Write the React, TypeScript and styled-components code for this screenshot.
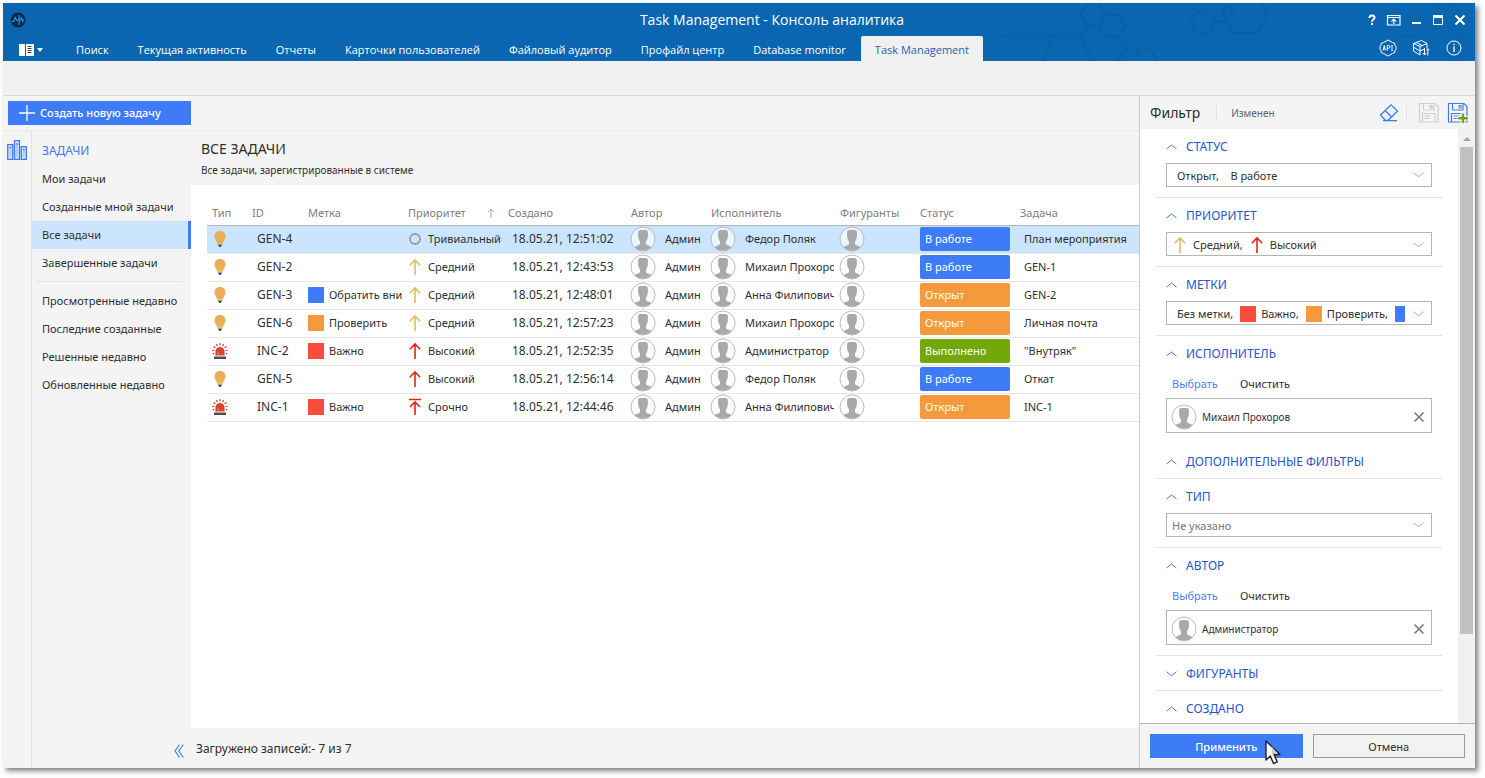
import React from 'react';
import styled, { createGlobalStyle, css } from 'styled-components';

const color = {
  header: '#0a66b0',
  accent: '#3d7bf7',
  heading: '#2456c8',
  text: '#2f2f2f',
  muted: '#7d7d7d',
  panel: '#f4f4f4',
  selected: '#cce5ff',
  line: '#e2e2e2',
  red: '#f84d3d',
  orange: '#f59a3c',
  green: '#72a80a',
};

const GlobalStyle = createGlobalStyle`
  *, *::before, *::after { box-sizing: border-box; }
  body {
    margin: 0;
    background: #fff;
    color: ${color.text};
    font-family: "Noto Sans", "Open Sans", sans-serif;
    font-size: 11px;
    line-height: 16px;
  }
  button, select { font: inherit; color: inherit; }
  h1, h2, h3, p, ul { margin: 0; padding: 0; }
  h1, h2, h3 { font-weight: 400; }
  svg { display: block; flex: none; }
`;

const Page = styled.div`
  height: 100vh;
  min-height: 600px;
  padding: 3px 10px 10px 3px;
`;

const Window = styled.div`
  display: flex;
  flex-direction: column;
  height: 100%;
  background: ${color.panel};
  box-shadow: 3px 3px 5px rgba(0, 0, 0, 0.5);
`;

/* ---------- header ---------- */

const Header = styled.header`
  position: relative;
  flex: none;
  background: ${color.header};
  color: #fff;
`;

const Pattern = styled.svg`
  position: absolute;
  top: 0;
  right: 0;
`;

const TitleRow = styled.div`
  position: relative;
  display: flex;
  align-items: center;
  height: 33px;
`;

const TitleStart = styled.div`
  width: 174px;
  padding-left: 7px;
`;

const Title = styled.h1`
  flex: 1;
  text-align: center;
  font-family: "Open Sans", "Noto Sans", sans-serif;
  font-size: 14px;
  line-height: 20px;
`;

const WindowControls = styled.div`
  display: flex;
  justify-content: flex-end;
  gap: 6px;
  width: 108px;
  padding-right: 7px;
`;

const BareButton = styled.button`
  display: flex;
  align-items: center;
  justify-content: center;
  flex: none;
  padding: 0;
  border: 0;
  background: none;
`;

const ControlButton = styled(BareButton)`
  width: 16px;
  height: 16px;
  color: #fff;
`;

const TabRow = styled.div`
  position: relative;
  display: flex;
  height: 25px;
`;

const MenuButton = styled(BareButton)`
  gap: 3px;
  width: 59px;
  padding: 2px 3px 0 0;
  color: #fff;
`;

const Tabs = styled.nav`
  display: flex;
  flex: 1;
  gap: 1px;
`;

const Tab = styled.a<{ $active?: boolean }>`
  padding: 6px 14px 3px;
  color: #fff;
  font-family: "Open Sans", "Noto Sans", sans-serif;
  text-decoration: none;
  white-space: nowrap;
  ${(p) =>
    p.$active &&
    css`
      border-radius: 2px 2px 0 0;
      background: #f0f0f0;
      color: #1c62b5;
    `}
`;

const HeaderTools = styled.div`
  display: flex;
  align-items: flex-start;
  gap: 15px;
  padding: 3px 12px 0 0;
`;

const ToolButton = styled(BareButton)`
  width: 18px;
  height: 18px;
  color: #fff;
`;

const Ribbon = styled.div`
  flex: none;
  height: 35px;
  border-bottom: 1px solid #d9d9d9;
  background: #f0f0f0;
`;

/* ---------- layout ---------- */

const Body = styled.div`
  display: flex;
  flex: 1;
  min-height: 0;
`;

const Main = styled.main`
  display: flex;
  flex: 1;
  flex-direction: column;
  min-width: 0;
`;

const Toolbar = styled.div`
  flex: none;
  height: 35px;
  padding: 5px;
  border-bottom: 1px solid #e8e8e8;
`;

const CreateButton = styled.button`
  display: flex;
  align-items: center;
  gap: 5px;
  width: 183px;
  height: 24px;
  padding: 0 11px;
  border: 0;
  background: ${color.accent};
  color: #fff;
  font-weight: 500;
  white-space: nowrap;
`;

const Workspace = styled.div`
  display: flex;
  flex: 1;
  min-height: 0;
`;

const Rail = styled.div`
  flex: none;
  width: 29px;
  padding: 9px 4px;
  border-right: 1px solid ${color.line};
`;

const SideNav = styled.nav`
  display: flex;
  flex: none;
  flex-direction: column;
  width: 159px;
  padding: 6px 0 8px;
`;

const NavTitle = styled.h2`
  padding: 6px 10px;
  color: ${color.accent};
  font-size: 12px;
  line-height: 16px;
`;

const NavList = styled.ul`
  list-style: none;
`;

const NavDivider = styled.div`
  height: 1px;
  margin: 4px 8px 5px 5px;
  background: ${color.line};
`;

const NavLink = styled.a<{ $active?: boolean }>`
  display: block;
  height: 28px;
  padding: 6px 7px 6px 10px;
  border-right: 3px solid ${(p) => (p.$active ? color.accent : 'transparent')};
  background: ${(p) => (p.$active ? color.selected : 'transparent')};
  color: ${color.text};
  text-decoration: none;
  white-space: nowrap;
`;

const CollapseButton = styled(BareButton)`
  align-self: flex-end;
  width: 24px;
  height: 18px;
  margin-top: auto;
  color: ${color.accent};
`;

const Content = styled.section`
  display: flex;
  flex: 1;
  flex-direction: column;
  min-width: 0;
`;

const ContentHeader = styled.div`
  flex: none;
  height: 54px;
  padding: 8px 10px;
`;

const ContentTitle = styled.h2`
  font-size: 14px;
  line-height: 20px;
`;

const ContentNote = styled.p`
  padding-top: 3px;
  font-size: 10px;
  line-height: 16px;
`;

const TableArea = styled.div`
  flex: 1;
  min-height: 0;
  overflow: hidden;
  padding: 16px 0 0 16px;
  background: #fff;
`;

const ContentFooter = styled.div`
  flex: none;
  height: 40px;
  padding: 13px 5px;
  font-size: 12px;
`;

/* ---------- table ---------- */

const Table = styled.table`
  width: 100%;
  table-layout: fixed;
  border-collapse: collapse;
`;

const HeadCell = styled.th`
  height: 24px;
  padding: 0 0 0 5px;
  border-bottom: 1px solid #b5b5b5;
  color: ${color.muted};
  font-weight: 400;
  text-align: left;
  white-space: nowrap;
`;

const SortLabel = styled.span`
  display: flex;
  align-items: center;
  justify-content: space-between;
  padding-right: 8px;
`;

const Row = styled.tr<{ $selected?: boolean }>`
  height: 28px;
  border-bottom: 1px solid #e6e6e6;
  background: ${(p) => (p.$selected ? color.selected : '#fff')};
`;

const Cell = styled.td<{ $indent?: number; $numeric?: boolean }>`
  padding: 0 0 0 ${(p) => p.$indent ?? 5}px;
  overflow: hidden;
  font-size: ${(p) => (p.$numeric ? 12 : 11)}px;
  white-space: nowrap;
`;

const Inline = styled.div<{ $gap: number }>`
  display: flex;
  align-items: center;
  gap: ${(p) => p.$gap}px;
  margin-right: 1px;
`;

const Clip = styled.span`
  flex: 1;
  min-width: 0;
  overflow: hidden;
`;

const Swatch = styled.span<{ $color: string }>`
  flex: none;
  width: 16px;
  height: 16px;
  background: ${(p) => p.$color};
`;

const Badge = styled.span<{ $color: string }>`
  display: block;
  width: 90px;
  height: 24px;
  padding: 4px 5px;
  border-radius: 2px;
  background: ${(p) => p.$color};
  color: #fff;
`;

/* ---------- filter panel ---------- */

const Filter = styled.aside`
  display: flex;
  flex: none;
  flex-direction: column;
  width: 336px;
  border-left: 1px solid #c9c9c9;
`;

const FilterHeader = styled.div`
  display: flex;
  align-items: center;
  flex: none;
  height: 33px;
  padding: 0 7px 0 10px;
`;

const FilterTitle = styled.h2`
  font-size: 14px;
  line-height: 20px;
`;

const Divider = styled.span`
  width: 1px;
  height: 16px;
  margin: 0 14px 0 16px;
  background: ${color.line};
`;

const FilterState = styled.span`
  flex: 1;
  color: #666;
  font-size: 10px;
`;

const FilterTools = styled.div`
  display: flex;
  align-items: center;
`;

const FilterTool = styled(BareButton)`
  width: 20px;
  height: 22px;
  margin-left: 9px;
`;

const FilterToolDivider = styled.span`
  width: 1px;
  height: 16px;
  margin: 0 3px 0 7px;
  background: ${color.line};
`;

const FilterBody = styled.div`
  display: flex;
  flex: 1;
  min-height: 0;
  background: #fff;
`;

const FilterSections = styled.div`
  flex: 1;
  min-width: 0;
  padding: 0 16px;
  overflow: hidden;
`;

const Scrollbar = styled.div`
  display: flex;
  flex: none;
  flex-direction: column;
  align-items: center;
  width: 17px;
  background: #f1f1f1;
`;

const ScrollArrow = styled(BareButton)`
  width: 17px;
  height: 18px;
  color: #a3a3a3;
`;

const ScrollThumb = styled.div`
  width: 13px;
  height: 82%;
  background: #c1c1c1;
`;

const Section = styled.section<{ $bare?: boolean; $line?: boolean }>`
  padding: 0 10px ${(p) => (p.$bare ? 0 : 10)}px;
  border-bottom: 1px solid ${(p) => (p.$line === false ? 'transparent' : color.line)};
`;

const SectionHeading = styled.h3`
  font-size: 12px;
`;

const SectionToggle = styled.button`
  display: flex;
  align-items: center;
  gap: 9px;
  width: 100%;
  height: 34px;
  padding: 2px 0 0;
  border: 0;
  background: none;
  color: ${color.heading};
  text-align: left;
`;

const fieldBox = css`
  display: flex;
  align-items: center;
  width: 100%;
  border: 1px solid #b4b4b4;
  border-radius: 0;
  background: #fff;
`;

const SelectWrap = styled.div`
  position: relative;
`;

const Select = styled.select<{ $empty?: boolean }>`
  ${fieldBox}
  height: 24px;
  padding: 2px 30px 0 ${(p) => (p.$empty ? 5 : 10)}px;
  appearance: none;
  color: ${(p) => (p.$empty ? '#777' : color.text)};
  white-space: pre;
`;

const SelectChevron = styled.span`
  position: absolute;
  top: 9px;
  right: 8px;
  pointer-events: none;
`;

const MultiSelect = styled.button`
  ${fieldBox}
  height: 24px;
  padding: 2px 7px 0 0;
  gap: 8px;
  text-align: left;
`;

const Choices = styled.span<{ $indent: number }>`
  display: flex;
  align-items: center;
  gap: 7px;
  flex: 1;
  min-width: 0;
  padding-left: ${(p) => p.$indent}px;
  overflow: hidden;
  white-space: nowrap;
`;

const Choice = styled.span<{ $gap: number }>`
  display: flex;
  align-items: center;
  gap: ${(p) => p.$gap}px;
`;

const LinkRow = styled.div`
  display: flex;
  align-items: center;
  gap: 22px;
  height: 28px;
  padding-left: 6px;
`;

const ActionLink = styled.a<{ $primary?: boolean }>`
  color: ${(p) => (p.$primary ? '#4a80f5' : color.text)};
  text-decoration: none;
`;

const PersonBox = styled.div`
  ${fieldBox}
  height: 35px;
  padding: 2px 5px 0 4px;
  gap: 5px;
  font-size: 10px;
`;

const PersonName = styled.span`
  flex: 1;
`;

const RemoveButton = styled(BareButton)`
  width: 14px;
  height: 14px;
  color: #757575;
`;

const FilterFooter = styled.div`
  display: flex;
  flex: none;
  gap: 10px;
  height: 45px;
  padding: 10px;
  border-top: 1px solid #b4b4b4;
`;

const FooterButton = styled.button<{ $primary?: boolean }>`
  position: relative;
  flex: 1;
  height: 24px;
  padding: 1px 0 0;
  border: 1px solid ${(p) => (p.$primary ? color.accent : '#9b9b9b')};
  background: ${(p) => (p.$primary ? color.accent : '#f2f2f2')};
  color: ${(p) => (p.$primary ? '#fff' : color.text)};
  font-weight: ${(p) => (p.$primary ? 500 : 400)};
`;

const Cursor = styled.svg`
  position: absolute;
  top: 4px;
  left: 113px;
  pointer-events: none;
`;

/* ---------- icons ---------- */

const BulbIcon = () => (
  <svg width="12" height="18" viewBox="0 0 12 18">
    <path
      d="M6 1C2.800 1 .4 3.200.4 6.200c0 2.200 1.200 3.600 2 5.200.5.900.7 1.600 1 2.400h5.200c.3-.8.5-1.500 1-2.400.8-1.600 2-3 2-5.200C11.600 3.200 9.200 1 6 1z"
      fill="#e8b056"
    />
    <path d="M3.800 14.500h4.400v1H3.800zM4.500 15.500h3L6.700 17H5.300z" fill="#3f4a52" />
  </svg>
);

const SirenIcon = () => (
  <svg width="16" height="18" viewBox="0 0 16 18">
    <path d="M3.500 13.500V9.500a4.500 4.500 0 0 1 9 0v4z" fill="#d2452f" />
    <path d="M6.300 13V9.500" stroke="#e98b7a" strokeWidth="1" />
    <path d="M2 14.500h12V17H2z" fill="#4b4b4b" />
    <path
      d="M8 1v2.600M4.400 2l1 2.200M11.600 2l-1 2.200M1.500 4.300l2 1.600M14.500 4.300l-2 1.600M.3 8.500h2.200M13.500 8.500h2.200M.8 12l1.700-.6M15.200 12l-1.700-.6"
      stroke="#d2452f"
      strokeWidth="1.200"
      fill="none"
    />
  </svg>
);

type PriorityKind = 'trivial' | 'medium' | 'high' | 'urgent';

const PriorityIcon = ({ kind }: { kind: PriorityKind }) => {
  if (kind === 'trivial') {
    return (
      <svg width="14" height="18" viewBox="0 0 14 18">
        <circle cx="7" cy="9" r="5" fill="none" stroke="#9c9c9c" strokeWidth="1.800" />
      </svg>
    );
  }
  const stroke = kind === 'medium' ? '#eab768' : '#dd2a12';
  return (
    <svg width="14" height="18" viewBox="0 0 14 18" fill="none" stroke={stroke} strokeWidth="1.600">
      {kind === 'urgent' ? (
        <path d="M1 1.500h12M7 17V4M2 9l5-5 5 5" />
      ) : (
        <path d="M7 17V2M1.800 7.200L7 2l5.200 5.200" />
      )}
    </svg>
  );
};

const Avatar = () => (
  <svg width="26" height="26" viewBox="0 0 26 26">
    <circle cx="13" cy="13" r="12" fill="#fff" fillOpacity=".6" stroke="#b9b9b9" strokeWidth="1" />
    <path
      d="M10.500 4h5c1.600 0 2.400 1 2.400 2.600v3.200c0 2.200-.7 4.200-1.900 5.600v2.300c0 1.400 3.500 1.900 5.300 3.200A11.500 11.500 0 0 1 13 24.500a11.500 11.500 0 0 1-8.300-3.600c1.800-1.300 5.300-1.800 5.300-3.200v-2.300c-1.200-1.400-1.900-3.400-1.900-5.600V6.600C8.100 5 8.900 4 10.500 4z"
      fill="#a9a9a9"
    />
  </svg>
);

const Chevron = ({ down, stroke }: { down?: boolean; stroke: string }) => (
  <svg width="11" height="6" viewBox="0 0 11 6" fill="none" stroke={stroke} strokeWidth="1">
    <path d={down ? 'M.5.700l5 4 5-4' : 'M.5 5l5-4 5 4'} />
  </svg>
);

const LogoIcon = () => (
  <svg width="16" height="16" viewBox="0 0 16 16">
    <circle cx="8" cy="8" r="7.500" fill="#06294d" />
    <path
      d="M1.500 9.500h2l1.800-4 1.500 3 1.500.2M9 3v10M9.500 8.500l1.800-2.500 1.200 3.500 1.500-2.500"
      fill="none"
      stroke="#2d9be6"
      strokeWidth="1.100"
    />
  </svg>
);

const PanelsIcon = () => (
  <svg width="15" height="12" viewBox="0 0 15 12">
    <path d="M0 0h15v12H0z" fill="#fff" />
    <path d="M6.500 0v12" stroke="#3b5568" strokeWidth="1" />
    <path d="M8.500 2.500h4M8.500 4.500h4M8.500 6.500h4M8.500 8.500h4" stroke="#3b3b3b" strokeWidth="1" />
  </svg>
);

const BarsIcon = () => (
  <svg width="20" height="20" viewBox="0 0 20 20" stroke={color.accent} strokeWidth="1.300">
    <path d="M.7 4.700h5v14.600h-5zM7.500.7h5v18.600h-5zM14.300 6.700h5v12.600h-5z" fill="#d6e3fd" />
    <path d="M3.200 7v10M10 3v14M16.800 9v8" stroke="#a5c2fb" />
    <path d="M2.500 7.500h1.500M9.300 4h1.500M16 9.500h1.500" />
  </svg>
);

const PlusIcon = () => (
  <svg width="16" height="16" viewBox="0 0 16 16" stroke="#fff" strokeWidth="1.300">
    <path d="M8 0v16M0 8h16" />
  </svg>
);

const ApiIcon = () => (
  <svg width="18" height="18" viewBox="0 0 18 18" fill="none" stroke="#fff" strokeWidth="1">
    <path d="M2.200 6V4.400L4.500 3.500 9 1l4.500 2.500 2.300.9V6M2.200 12v1.600l2.300.9L9 17l4.500-2.500 2.300-.9V12M2.200 6L1 7.500v3L2.200 12M15.800 6L17 7.500v3L15.800 12" />
    <path d="M4 11.500l1.300-5 1.300 5M4.500 10h1.700M8.300 11.500v-5h1.400a1.300 1.300 0 0 1 0 2.700H8.300M13 6.500v5M12.300 6.500h1.500M12.300 11.500h1.500" strokeWidth=".9" />
  </svg>
);

const BoxIcon = () => (
  <svg width="18" height="18" viewBox="0 0 18 18" fill="none" stroke="#fff" strokeWidth="1">
    <path d="M1.500 4.500L9.500 1.500l5.500 3-7 3zM1.500 4.500V12L8 16V7.500M15 4.500V9M1.500 8.200L8 12l4-1.700M4.500 3.500l6.500 3.500" />
    <path d="M12.500 9v6.500M10.800 14l1.700 2 1.700-2M15.800 16.500V10M14.500 11.300L15.800 9.500l1.400 1.800" />
  </svg>
);

const InfoIcon = () => (
  <svg width="18" height="18" viewBox="0 0 18 18" fill="none" stroke="#fff">
    <circle cx="9" cy="9" r="7" strokeWidth="1" />
    <path d="M9 7.500V13M9 4.800v1.400" strokeWidth="1.300" />
  </svg>
);

const EraserIcon = () => (
  <svg width="20" height="20" viewBox="0 0 20 20" fill="none" stroke={color.accent} strokeWidth="1.300">
    <path d="M1.500 12L12 1.800 18.500 8 9 17.500H6.500z" fill="#eaf1fe" />
    <path d="M6 7.500l6.500 6.300M4 17.700h14" />
  </svg>
);

const SaveIcon = ({ active }: { active?: boolean }) => {
  const stroke = active ? color.accent : '#cfcfcf';
  return (
    <svg width="22" height="22" viewBox="0 0 22 22" fill="none" stroke={stroke} strokeWidth="1.200">
      <path d="M1.500 1.500h15.500l3 3v15.500H1.500z" fill={active ? '#f4f8ff' : '#f6f6f6'} />
      <path d="M5.500 1.500v6.500h10.500V1.500M4.500 20v-8.500H17V20" />
      <path d="M12 3.500h2v2.500h-2zM6.500 14h6M6.500 16.500h5" stroke={active ? '#7b8794' : '#c4c4c4'} />
      {active && (
        <>
          <path d="M16 11v10.500M10.500 16.200H21.500" stroke="#f4f8ff" strokeWidth="4.500" />
          <path d="M16 11.500v9.500M11.200 16.200h9.800" stroke="#72a80a" strokeWidth="2.400" />
        </>
      )}
    </svg>
  );
};

/* ---------- data ---------- */

const tabs = [
  'Поиск',
  'Текущая активность',
  'Отчеты',
  'Карточки пользователей',
  'Файловый аудитор',
  'Профайл центр',
  'Database monitor',
  'Task Management',
];

const mainLinks = ['Мои задачи', 'Созданные мной задачи', 'Все задачи', 'Завершенные задачи'];
const recentLinks = [
  'Просмотренные недавно',
  'Последние созданные',
  'Решенные недавно',
  'Обновленные недавно',
];

const labelColors: Record<string, string> = {
  'Обратить внимание': color.accent,
  Проверить: color.orange,
  Важно: color.red,
};

const priorities: Record<PriorityKind, string> = {
  trivial: 'Тривиальный',
  medium: 'Средний',
  high: 'Высокий',
  urgent: 'Срочно',
};

const statusColors: Record<string, string> = {
  'В работе': color.accent,
  Открыт: color.orange,
  Выполнено: color.green,
};

interface Task {
  id: string;
  label?: string;
  priority: PriorityKind;
  created: string;
  assignee: string;
  status: string;
  name: string;
}

const tasks: Task[] = [
  { id: 'GEN-4', priority: 'trivial', created: '18.05.21, 12:51:02', assignee: 'Федор Поляк', status: 'В работе', name: 'План мероприятия' },
  { id: 'GEN-2', priority: 'medium', created: '18.05.21, 12:43:53', assignee: 'Михаил Прохоров', status: 'В работе', name: 'GEN-1' },
  { id: 'GEN-3', label: 'Обратить внимание', priority: 'medium', created: '18.05.21, 12:48:01', assignee: 'Анна Филипович', status: 'Открыт', name: 'GEN-2' },
  { id: 'GEN-6', label: 'Проверить', priority: 'medium', created: '18.05.21, 12:57:23', assignee: 'Михаил Прохоров', status: 'Открыт', name: 'Личная почта' },
  { id: 'INC-2', label: 'Важно', priority: 'high', created: '18.05.21, 12:52:35', assignee: 'Администратор', status: 'Выполнено', name: '"Внутряк"' },
  { id: 'GEN-5', priority: 'high', created: '18.05.21, 12:56:14', assignee: 'Федор Поляк', status: 'В работе', name: 'Откат' },
  { id: 'INC-1', label: 'Важно', priority: 'urgent', created: '18.05.21, 12:44:46', assignee: 'Анна Филипович', status: 'Открыт', name: 'INC-1' },
];

const columnWidths = [40, 56, 100, 100, 123, 80, 129, 80, 100];

/* ---------- parts ---------- */

const AppHeader = () => (
  <Header>
    <Pattern width="475" height="58" viewBox="0 0 475 58" fill="none" stroke="#095fa6" strokeWidth="1.500" aria-hidden>
      <path d="M80 12l8-12M99 0l7 12-8 11H87l-7-11M106 12h13l6 11-6 10h-14l-6-10M125 23h9M2 33h79l6-10M54 33L43 58M81 33l11 25M105 33l13 2 7 10-7 13M125 45h9M136 52l3-7h11l7 13" />
      <path d="M190 20l7-11h13l6 10-6 12h-13zM216 19h11M228 0l-6 10 10 20h25l11-18-6-12M228 0l5 10-7 10" />
      <path d="M440 0l-6 10 6 10h12l6 12 12 2M458 32l-6 12 6 14M385 58l13-25h20l6 12-6 13M452 20l6-10-5-10" opacity=".6" />
    </Pattern>
    <TitleRow>
      <TitleStart>
        <LogoIcon />
      </TitleStart>
      <Title>Task Management - Консоль аналитика</Title>
      <WindowControls>
        <ControlButton aria-label="Справка">
          <svg width="16" height="16" viewBox="0 0 16 16" fill="none" stroke="#fff" strokeWidth="2">
            <path d="M5.500 6c0-1.800 1-2.500 2.500-2.500s2.500.8 2.500 2.200C10.500 7.500 8 7.500 8 9.700M8 11v2" />
          </svg>
        </ControlButton>
        <ControlButton aria-label="Свернуть ленту">
          <svg width="16" height="16" viewBox="0 0 16 16" fill="none" stroke="#fff" strokeWidth="1.200">
            <path d="M1.500 3.500h12.500v9.500H1.500zM1.500 5.500h12.500M7.800 12V7.500M5.500 9.500l2.300-2.300 2.300 2.300" />
          </svg>
        </ControlButton>
        <ControlButton aria-label="Свернуть">
          <svg width="16" height="16" viewBox="0 0 16 16" stroke="#fff" strokeWidth="2">
            <path d="M4 11h9" />
          </svg>
        </ControlButton>
        <ControlButton aria-label="Развернуть">
          <svg width="16" height="16" viewBox="0 0 16 16" fill="none" stroke="#fff">
            <path d="M3.500 4v8.500h9V4" />
            <path d="M3 4.500h10" strokeWidth="3" />
          </svg>
        </ControlButton>
        <ControlButton aria-label="Закрыть">
          <svg width="16" height="16" viewBox="0 0 16 16" stroke="#fff" strokeWidth="2">
            <path d="M3.500 3.500l9 9M12.500 3.500l-9 9" />
          </svg>
        </ControlButton>
      </WindowControls>
    </TitleRow>
    <TabRow>
      <MenuButton aria-label="Меню">
        <PanelsIcon />
        <svg width="6" height="4" viewBox="0 0 6 4">
          <path d="M0 0h6L3 4z" fill="#fff" />
        </svg>
      </MenuButton>
      <Tabs>
        {tabs.map((name, i) => (
          <Tab key={name} href="#" $active={i === tabs.length - 1}>
            {name}
          </Tab>
        ))}
      </Tabs>
      <HeaderTools>
        <ToolButton aria-label="API"><ApiIcon /></ToolButton>
        <ToolButton aria-label="Обновление"><BoxIcon /></ToolButton>
        <ToolButton aria-label="О программе"><InfoIcon /></ToolButton>
      </HeaderTools>
    </TabRow>
  </Header>
);

const Links = ({ items, active }: { items: string[]; active?: string }) => (
  <NavList>
    {items.map((name) => (
      <li key={name}>
        <NavLink href="#" $active={name === active}>{name}</NavLink>
      </li>
    ))}
  </NavList>
);

const TaskTable = () => (
  <Table>
    <colgroup>
      {columnWidths.map((width, i) => (
        <col key={i} width={width} />
      ))}
      <col />
    </colgroup>
    <thead>
      <tr>
        <HeadCell>Тип</HeadCell>
        <HeadCell>ID</HeadCell>
        <HeadCell>Метка</HeadCell>
        <HeadCell>
          <SortLabel>
            Приоритет
            <svg width="8" height="10" viewBox="0 0 8 10" fill="none" stroke="#aaa">
              <path d="M4 10V1M1 4l3-3 3 3" />
            </svg>
          </SortLabel>
        </HeadCell>
        <HeadCell>Создано</HeadCell>
        <HeadCell>Автор</HeadCell>
        <HeadCell>Исполнитель</HeadCell>
        <HeadCell>Фигуранты</HeadCell>
        <HeadCell>Статус</HeadCell>
        <HeadCell>Задача</HeadCell>
      </tr>
    </thead>
    <tbody>
      {tasks.map((task, i) => (
        <Row key={task.id} $selected={i === 0}>
          {task.id.startsWith('GEN') ? (
            <Cell $indent={7}><BulbIcon /></Cell>
          ) : (
            <Cell><SirenIcon /></Cell>
          )}
          <Cell $indent={10} $numeric>{task.id}</Cell>
          <Cell>
            {task.label && (
              <Inline $gap={5}>
                <Swatch $color={labelColors[task.label]} />
                <Clip>{task.label}</Clip>
              </Inline>
            )}
          </Cell>
          <Cell>
            <Inline $gap={6}>
              <PriorityIcon kind={task.priority} />
              <Clip>{priorities[task.priority]}</Clip>
            </Inline>
          </Cell>
          <Cell $indent={9} $numeric>{task.created}</Cell>
          <Cell $indent={4}>
            <Inline $gap={9}>
              <Avatar />
              <Clip>Админ</Clip>
            </Inline>
          </Cell>
          <Cell $indent={4}>
            <Inline $gap={9}>
              <Avatar />
              <Clip>{task.assignee}</Clip>
            </Inline>
          </Cell>
          <Cell $indent={4}><Avatar /></Cell>
          <Cell $indent={5}>
            <Badge $color={statusColors[task.status]}>{task.status}</Badge>
          </Cell>
          <Cell $indent={9}>{task.name}</Cell>
        </Row>
      ))}
    </tbody>
  </Table>
);

interface FilterSectionProps {
  id: string;
  title: string;
  collapsed?: boolean;
  line?: boolean;
  children?: React.ReactNode;
}

const FilterSection = ({ id, title, collapsed, line, children }: FilterSectionProps) => (
  <Section $bare={!children} $line={line}>
    <SectionHeading>
      <SectionToggle id={id} aria-expanded={!collapsed}>
        <Chevron down={collapsed} stroke={color.accent} />
        {title}
      </SectionToggle>
    </SectionHeading>
    {children}
  </Section>
);

const SingleSelect = ({ labelId, value, empty }: { labelId: string; value: string; empty?: boolean }) => (
  <SelectWrap>
    <Select aria-labelledby={labelId} $empty={empty}>
      <option>{value}</option>
    </Select>
    <SelectChevron>
      <Chevron down stroke="#a8a8a8" />
    </SelectChevron>
  </SelectWrap>
);

const PersonPicker = ({ name }: { name: string }) => (
  <>
    <LinkRow>
      <ActionLink href="#" $primary>Выбрать</ActionLink>
      <ActionLink href="#">Очистить</ActionLink>
    </LinkRow>
    <PersonBox>
      <Avatar />
      <PersonName>{name}</PersonName>
      <RemoveButton aria-label="Удалить">
        <svg width="12" height="12" viewBox="0 0 12 12" stroke="currentColor" strokeWidth="1.500">
          <path d="M1.500 1.500l9 9M10.500 1.500l-9 9" />
        </svg>
      </RemoveButton>
    </PersonBox>
  </>
);

const FilterPanel = () => (
  <Filter>
    <FilterHeader>
      <FilterTitle>Фильтр</FilterTitle>
      <Divider />
      <FilterState>Изменен</FilterState>
      <FilterTools>
        <FilterTool aria-label="Очистить фильтр"><EraserIcon /></FilterTool>
        <FilterToolDivider />
        <FilterTool aria-label="Сохранить" disabled><SaveIcon /></FilterTool>
        <FilterTool aria-label="Сохранить как новый"><SaveIcon active /></FilterTool>
      </FilterTools>
    </FilterHeader>
    <FilterBody>
      <FilterSections>
        <FilterSection id="status" title="СТАТУС">
          <SingleSelect labelId="status" value={'Открыт,\u00a0\u00a0\u00a0 В работе'} />
        </FilterSection>
        <FilterSection id="priority" title="ПРИОРИТЕТ">
          <MultiSelect aria-haspopup="listbox" aria-describedby="priority">
            <Choices $indent={6}>
              <Choice $gap={6}><PriorityIcon kind="medium" />Средний,</Choice>
              <Choice $gap={6}><PriorityIcon kind="high" />Высокий</Choice>
            </Choices>
            <Chevron down stroke="#a8a8a8" />
          </MultiSelect>
        </FilterSection>
        <FilterSection id="labels" title="МЕТКИ">
          <MultiSelect aria-haspopup="listbox" aria-describedby="labels">
            <Choices $indent={10}>
              <span>Без метки,</span>
              <Choice $gap={5}><Swatch $color={color.red} />Важно,</Choice>
              <Choice $gap={5}><Swatch $color={color.orange} />Проверить,</Choice>
              <Swatch $color={color.accent} />
            </Choices>
            <Chevron down stroke="#a8a8a8" />
          </MultiSelect>
        </FilterSection>
        <FilterSection id="assignee" title="ИСПОЛНИТЕЛЬ" line={false}>
          <PersonPicker name="Михаил Прохоров" />
        </FilterSection>
        <FilterSection id="extra" title="ДОПОЛНИТЕЛЬНЫЕ ФИЛЬТРЫ" />
        <FilterSection id="type" title="ТИП">
          <SingleSelect labelId="type" value="Не указано" empty />
        </FilterSection>
        <FilterSection id="author" title="АВТОР">
          <PersonPicker name="Администратор" />
        </FilterSection>
        <FilterSection id="persons" title="ФИГУРАНТЫ" collapsed />
        <FilterSection id="created" title="СОЗДАНО" />
      </FilterSections>
      <Scrollbar>
        <ScrollArrow aria-label="Прокрутить вверх">
          <svg width="8" height="5" viewBox="0 0 8 5">
            <path d="M0 5l4-4 4 4z" fill="currentColor" />
          </svg>
        </ScrollArrow>
        <ScrollThumb />
      </Scrollbar>
    </FilterBody>
    <FilterFooter>
      <FooterButton $primary>
        Применить
        <Cursor width="18" height="28" viewBox="0 0 18 28" aria-hidden>
          <path
            d="M2 2v19l4.300-4 3.200 7.500 3.700-1.600L10 15.500h6z"
            fill="#fff"
            stroke="#222"
            strokeWidth="1.400"
            strokeLinejoin="round"
          />
          <path d="M13 14.300l-5-6.500v8z" fill="#c9c9c9" />
        </Cursor>
      </FooterButton>
      <FooterButton>Отмена</FooterButton>
    </FilterFooter>
  </Filter>
);

export default function App() {
  return (
    <Page>
      <GlobalStyle />
      <Window>
        <AppHeader />
        <Ribbon />
        <Body>
          <Main>
            <Toolbar>
              <CreateButton>
                <PlusIcon />
                Создать новую задачу
              </CreateButton>
            </Toolbar>
            <Workspace>
              <Rail>
                <BarsIcon />
              </Rail>
              <SideNav>
                <NavTitle>ЗАДАЧИ</NavTitle>
                <Links items={mainLinks} active="Все задачи" />
                <NavDivider />
                <Links items={recentLinks} />
                <CollapseButton aria-label="Свернуть панель">
                  <svg width="10" height="14" viewBox="0 0 10 14" fill="none" stroke="currentColor" strokeWidth="1.100">
                    <path d="M5.500.5L1 7l4.500 6.500M9.300.5L4.800 7l4.500 6.500" />
                  </svg>
                </CollapseButton>
              </SideNav>
              <Content>
                <ContentHeader>
                  <ContentTitle>ВСЕ ЗАДАЧИ</ContentTitle>
                  <ContentNote>Все задачи, зарегистрированные в системе</ContentNote>
                </ContentHeader>
                <TableArea>
                  <TaskTable />
                </TableArea>
                <ContentFooter>Загружено записей:- 7 из 7</ContentFooter>
              </Content>
            </Workspace>
          </Main>
          <FilterPanel />
        </Body>
      </Window>
    </Page>
  );
}
